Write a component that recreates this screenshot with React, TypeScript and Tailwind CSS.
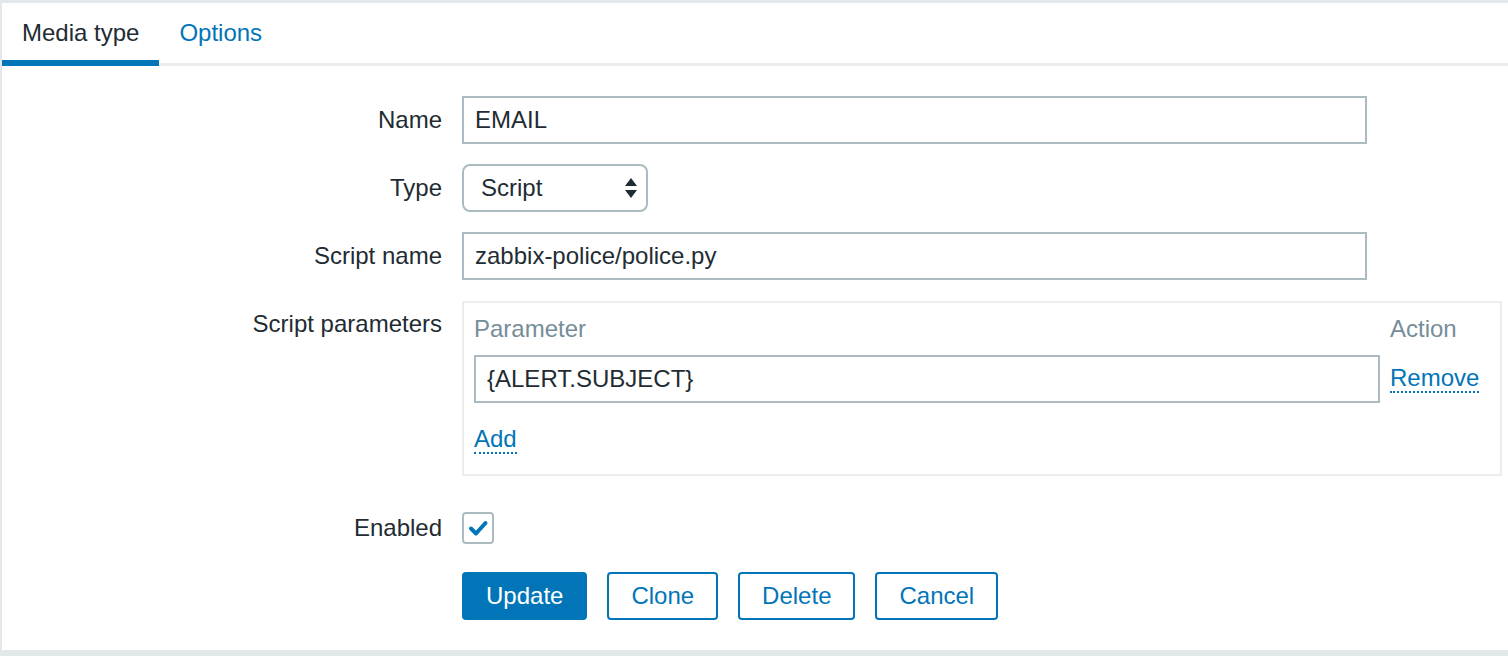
const font = { fontFamily: '"Liberation Sans", Arial, sans-serif' };

function Label({ children, top }: { children: string; top?: boolean }) {
  return (
    <div
      className={`w-[440px] shrink-0 text-right text-[24px] leading-[28px] text-[#1f2c33] ${
        top ? "self-start pt-[9px]" : ""
      }`}
    >
      {children}
    </div>
  );
}

function TextBox({ value, className = "" }: { value: string; className?: string }) {
  return (
    <div
      className={`flex h-[48px] items-center border-2 border-[#acbbc2] bg-white px-[11px] text-[24px] text-[#1f2c33] ${className}`}
    >
      {value}
    </div>
  );
}

function DottedLink({ children }: { children: string }) {
  return (
    <span className="inline-block border-b-2 border-dotted border-[#0275b8] text-[24px] leading-[26px] text-[#0275b8]">
      {children}
    </span>
  );
}

export default function App() {
  return (
    <div style={font} className="h-[656px] w-[1508px] bg-[#e3e8eb] pl-[2px] pt-[3px] pb-[6px]">
      <div className="h-full bg-white">
        {/* tabs */}
        <div className="flex h-[63px] border-b-[3px] border-[#ebeef0]">
          <div className="flex h-[63px] shrink-0 items-center border-b-[6px] border-[#0275b8] px-[20px] pt-[3px] text-[24px] text-[#1f2c33]">
            Media type
          </div>
          <div className="flex h-[60px] items-center px-[20px] text-[24px] text-[#0275b8]">Options</div>
        </div>

        <div className="flex flex-col pt-[30px]">
          <div className="flex items-center gap-[20px]">
            <Label>Name</Label>
            <TextBox value="EMAIL" className="w-[905px]" />
          </div>

          <div className="mt-[20px] flex items-center gap-[20px]">
            <Label>Type</Label>
            <div className="flex h-[48px] w-[186px] items-center justify-between rounded-[8px] border-2 border-[#acbbc2] pl-[17px] pr-[8px] text-[24px] text-[#1f2c33]">
              <span>Script</span>
              <svg width="14" height="22" viewBox="0 0 14 22">
                <polygon points="7,1 13,9 1,9" fill="#1f2c33" />
                <polygon points="1,13 13,13 7,21" fill="#1f2c33" />
              </svg>
            </div>
          </div>

          <div className="mt-[20px] flex items-center gap-[20px]">
            <Label>Script name</Label>
            <TextBox value="zabbix-police/police.py" className="w-[905px]" />
          </div>

          <div className="mt-[21px] flex gap-[20px]">
            <Label top>Script parameters</Label>
            <div className="h-[175px] w-[1040px] border-2 border-[#ebeef0] px-[10px] pt-[10px]">
              <div className="flex gap-[10px] text-[24px] leading-[32px] text-[#768d99]">
                <div className="w-[906px]">Parameter</div>
                <div>Action</div>
              </div>
              <div className="mt-[10px] flex items-center gap-[10px]">
                <TextBox value="{ALERT.SUBJECT}" className="w-[906px]" />
                <DottedLink>Remove</DottedLink>
              </div>
              <div className="mt-[23px]">
                <DottedLink>Add</DottedLink>
              </div>
            </div>
          </div>

          <div className="mt-[36px] flex items-center gap-[20px]">
            <Label>Enabled</Label>
            <div className="flex h-[32px] w-[32px] items-center justify-center rounded-[4px] border-2 border-[#acbbc2]">
              <svg width="22" height="22" viewBox="0 0 22 22">
                <polyline
                  points="4,11.5 9,16.5 18.5,6"
                  fill="none"
                  stroke="#0275b8"
                  strokeWidth="4"
                  strokeLinecap="round"
                  strokeLinejoin="round"
                />
              </svg>
            </div>
          </div>

          <div className="mt-[28px] flex gap-[20px] pl-[460px]">
            <button className="h-[48px] rounded-[4px] border-2 border-[#0275b8] bg-[#0275b8] px-[22px] text-[24px] text-white">
              Update
            </button>
            {["Clone", "Delete", "Cancel"].map((b) => (
              <button
                key={b}
                className="h-[48px] rounded-[4px] border-2 border-[#0275b8] bg-white px-[22px] text-[24px] text-[#0275b8]"
              >
                {b}
              </button>
            ))}
          </div>
        </div>
      </div>
    </div>
  );
}
